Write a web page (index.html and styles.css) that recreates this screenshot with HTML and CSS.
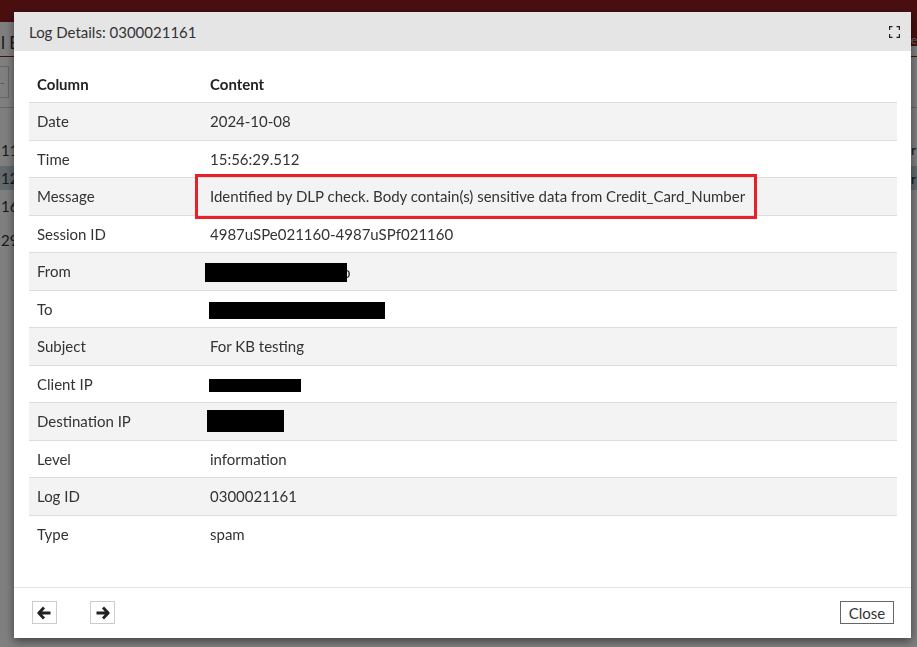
FILE: index.html
```html
<!DOCTYPE html>
<html>
<head>
<meta charset="utf-8">
<link rel="stylesheet" href="styles.css">
</head>
<body>
<div class="app">
  <div class="topbar"></div>
  <div class="tabs"><span class="tab">l E</span><span class="tab-right">e</span></div>
  <div class="toolbar"><span class="tbtn">-</span></div>
  <div class="grid">
    <div class="grow r1"><span>11</span><span class="gr">r</span></div>
    <div class="grow sel"><span>12</span><span class="gr">r</span></div>
    <div class="grow r3"><span>16</span><span class="gr"></span></div>
    <div class="grow r4"><span>29</span><span class="gr"></span></div>
  </div>
</div>
<div class="overlay"></div>
<div class="modal">
  <div class="mhead">
    <span class="mtitle">Log Details: 0300021161</span>
    <svg class="expand" width="11" height="12" viewBox="0 0 11 12"><path d="M0.5 4V0.5H3.5M7.5 0.5H10.5V4M10.5 8V11.5H7.5M3.5 11.5H0.5V8" fill="none" stroke="#222" stroke-width="1.4"/></svg>
  </div>
  <div class="mbody">
    <table class="details">
      <thead><tr><th class="c1">Column</th><th>Content</th></tr></thead>
      <tbody>
        <tr><td>Date</td><td>2024-10-08</td></tr>
        <tr><td>Time</td><td>15:56:29.512</td></tr>
        <tr><td>Message</td><td><span class="hl">Identified by DLP check. Body contain(s) sensitive data from Credit_Card_Number</span></td></tr>
        <tr><td>Session ID</td><td>4987uSPe021160-4987uSPf021160</td></tr>
        <tr><td>From</td><td><span class="redact r-from"></span><span class="tail">o</span></td></tr>
        <tr><td>To</td><td><span class="redact r-to"></span></td></tr>
        <tr><td>Subject</td><td>For KB testing</td></tr>
        <tr><td>Client IP</td><td><span class="redact r-cip"></span></td></tr>
        <tr><td>Destination IP</td><td><span class="redact r-dip"></span></td></tr>
        <tr><td>Level</td><td>information</td></tr>
        <tr><td>Log ID</td><td>0300021161</td></tr>
        <tr><td>Type</td><td>spam</td></tr>
      </tbody>
    </table>
  </div>
  <div class="mfoot">
    <div class="navs">
      <button class="nav"><svg width="15" height="14" viewBox="0 0 15 14"><path d="M7 1.5L1.8 7L7 12.5M2.2 7H13.5" fill="none" stroke="#222" stroke-width="2.8" stroke-linejoin="round"/></svg></button>
      <button class="nav"><svg width="15" height="14" viewBox="0 0 15 14"><path d="M8 1.5L13.2 7L8 12.5M12.8 7H1.5" fill="none" stroke="#222" stroke-width="2.8" stroke-linejoin="round"/></svg></button>
    </div>
    <button class="close">Close</button>
  </div>
</div>
</body>
</html>
```

FILE: styles.css
```css
html, body {
  margin: 0;
  padding: 0;
  width: 917px;
  height: 647px;
  overflow: hidden;
  font-family: Lato, "Open Sans", sans-serif;
  background: #fff;
}
.app {
  width: 917px;
  height: 647px;
  background: #fff;
  color: #333;
  font-size: 15px;
}
.topbar {
  height: 22px;
  background: #931f1f;
}
.tabs {
  height: 34px;
  border-bottom: 1px solid #931f1f;
  display: flex;
  align-items: center;
  justify-content: space-between;
}
.tab { margin-left: 1px; font-size: 17px; margin-top: 6px; }
.tab-right {
  background: #931f1f;
  color: #ddd;
  height: 24px;
  margin-top: -10px;
  width: 6px;
  font-size: 11px;
  display: flex;
  align-items: flex-end;
}
.toolbar {
  height: 50px;
  border-bottom: 1px solid #ccc;
  display: flex;
  align-items: center;
}
.tbtn {
  width: 8px;
  height: 30px;
  border: 1px solid #ccc;
  border-left: none;
  color: #999;
  font-size: 12px;
  display: flex;
  align-items: center;
  justify-content: flex-start;
}
.grid { margin-top: 25px; }
.grow {
  height: 33px;
  display: flex;
  justify-content: space-between;
  align-items: center;
  font-size: 15px;
  padding-left: 1px;
}
.grow.sel { background: #c5d4dc; height: 24px; }
.grow.r3 { height: 32px; }
.grow.r4 { height: 35px; }
.gr { width: 6px; font-size: 14px; }
.overlay {
  position: fixed;
  inset: 0;
  background: rgba(0, 0, 0, 0.5);
}
.modal {
  position: fixed;
  left: 14px;
  top: 12px;
  width: 897px;
  height: 626px;
  background: #fff;
  box-shadow: 0 3px 9px rgba(0, 0, 0, 0.5);
  display: flex;
  flex-direction: column;
  color: #333;
}
.mhead {
  height: 39px;
  flex: none;
  background: #e5e5e5;
  display: flex;
  align-items: center;
  justify-content: space-between;
  padding: 0 11px 0 15px;
}
.mtitle { font-size: 15px; color: #333; }
.expand { display: block; margin-top: 1px; }
.mbody {
  flex: 1;
  padding: 14px 14px 0 15px;
}
.details {
  width: 868px;
  border-collapse: collapse;
  font-size: 15px;
}
.details th, .details td {
  text-align: left;
  padding: 0 8px;
  height: 37.5px;
  box-sizing: border-box;
  vertical-align: middle;
}
.details th {
  font-weight: 700;
  color: #222;
  border-bottom: 1px solid #ddd;
}
.details td { border-top: 1px solid #ddd; color: #333; }
.details th.c1 { width: 173px; }
.details tbody tr:nth-child(odd) td { background: #f3f3f3; }
.hl { position: relative; }
.hl::after {
  content: "";
  position: absolute;
  left: -15px;
  right: -12px;
  top: -13px;
  bottom: -14px;
  border: 3px solid #e8202a;
}
.redact { display: inline-block; background: #000; vertical-align: middle; position: relative; z-index: 1; }
.r-from { width: 142px; height: 19px; margin-left: -5px; }
.tail { display: inline-block; vertical-align: middle; margin-left: -5px; }
.r-to { width: 176px; height: 17px; margin-left: -1px; }
.r-cip { width: 92px; height: 13px; margin-left: -1px; }
.r-dip { width: 77px; height: 22px; margin-left: -3px; }
.mfoot {
  height: 51px;
  flex: none;
  border-top: 1px solid #e5e5e5;
  display: flex;
  align-items: flex-start;
  justify-content: space-between;
  padding: 13px 17px 0 18px;
  box-sizing: border-box;
}
.navs { display: flex; gap: 33px; }
.nav {
  width: 25px;
  height: 23px;
  border: 1px solid #ccc;
  background: #fff;
  padding: 0;
  display: flex;
  align-items: center;
  justify-content: center;
}
.nav svg { display: block; }
.close {
  width: 54px;
  height: 23px;
  border: 1px solid #666;
  background: #fff;
  color: #333;
  font-family: Lato, sans-serif;
  font-size: 15px;
  padding: 1px 0 0;
  line-height: 20px;
}
```
